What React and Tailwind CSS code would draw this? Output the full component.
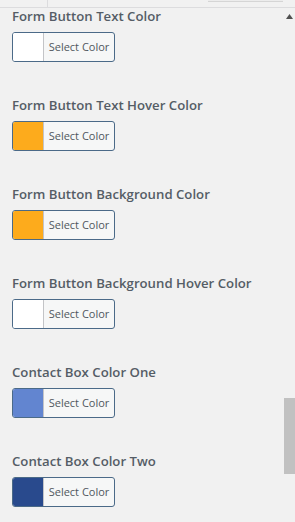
const fields = [
  { label: 'Form Button Text Color', color: '#ffffff' },
  { label: 'Form Button Text Hover Color', color: '#fdab1c' },
  { label: 'Form Button Background Color', color: '#fdab1c' },
  { label: 'Form Button Background Hover Color', color: '#ffffff' },
  { label: 'Contact Box Color One', color: '#6285d0' },
  { label: 'Contact Box Color Two', color: '#294a8d' },
]

const ColorField = ({ label, color }) => {
  return (
    <div className="flex flex-col mb-[35px]">
      <div className="text-[13.2px] leading-[17px] font-semibold text-[#555d66]">{label}</div>
      <button className="mt-[7px] flex h-[30px] w-[103px] items-stretch overflow-hidden rounded-[3px] border border-[#4b6a88] bg-[#f6f7f7]">
        <span className="w-[31px] border-r border-[#c3c4c7]" style={{ backgroundColor: color }} />
        <span className="flex flex-1 items-center justify-center text-[11px] text-[#50575e]">Select Color</span>
      </button>
    </div>
  )
}

export default function App() {
  return (
    <div
      className="flex h-[522px] w-[295px] flex-col overflow-hidden bg-[#f1f1f1]"
      style={{ fontFamily: '"Open Sans", "Noto Sans", sans-serif' }}
    >
      <div className="flex h-[8px] shrink-0 border-b border-[#dcdcde]">
        <div className="w-[48px] border-r border-[#dcdcde]" />
        <div className="flex-1" />
        <div className="mr-[12px] h-[2px] w-[75px] border-b border-[#d5d5d5] bg-[#ececec]" />
      </div>
      <div className="flex flex-1">
        <div className="flex-1 pl-[12px]">
          {fields.map((f) => (
            <ColorField key={f.label} label={f.label} color={f.color} />
          ))}
        </div>
        <div className="flex w-[11px] flex-col items-center">
          <svg width="7" height="5" viewBox="0 0 7 5" className="mt-[6px]">
            <polygon points="3.5,0 7,5 0,5" fill="#505050" />
          </svg>
          <div className="mt-[379px] h-[76px] w-[11px] bg-[#c1c1c1]" />
        </div>
      </div>
    </div>
  )
}
